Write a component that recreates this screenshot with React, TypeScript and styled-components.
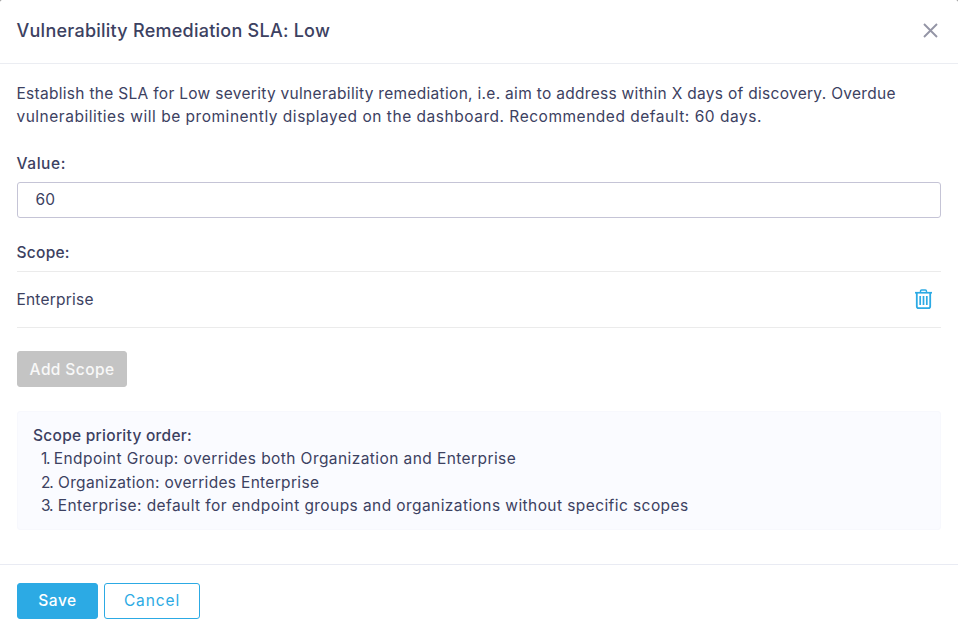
import React from 'react';
import styled, { createGlobalStyle } from 'styled-components';

const GlobalStyle = createGlobalStyle`
  * { box-sizing: border-box; }
  body {
    margin: 0;
    background: #808080;
    color: #3c4161;
    font: 400 15.5px/23.33px Inter, 'Liberation Sans', sans-serif;
  }
  button, input { font: inherit; color: inherit; }
`;

const Dialog = styled.section`
  display: flex;
  flex-direction: column;
  height: 635px;
  background: #fff;
  border-radius: 2px 2px 0 0;
`;

const Header = styled.header`
  display: flex;
  align-items: center;
  justify-content: space-between;
  height: 64px;
  padding: 0 20px 2px 16.5px;
  border-bottom: 1px solid #ebedf2;
`;

const Title = styled.h1`
  margin: 0;
  font-size: 18px;
  font-weight: 500;
  line-height: 24px;
  letter-spacing: 0.25px;
`;

const IconButton = styled.button`
  display: flex;
  padding: 0;
  border: 0;
  background: none;
  cursor: pointer;
`;

const Body = styled.main`
  flex: 1;
  padding: 18px 17px 0;
`;

const Text = styled.span<{ $tracking: number }>`
  letter-spacing: ${(p) => p.$tracking}px;
  white-space: nowrap;
`;

const Description = styled.p`
  display: flex;
  flex-direction: column;
  margin: 0 0 0 -0.6px;
`;

const Label = styled.label<{ $tracking: number }>`
  display: block;
  margin-left: -0.4px;
  font-weight: 500;
  letter-spacing: ${(p) => p.$tracking}px;
`;

const ValueField = styled.div`
  display: flex;
  flex-direction: column;
  gap: 7px;
  margin-top: 23px;
`;

const ValueInput = styled.input`
  width: 100%;
  height: 36px;
  padding: 0 17.4px;
  border: 1px solid #c5c4d6;
  border-radius: 3px;
  background: #fff;
  letter-spacing: 0.3px;
  outline: none;
`;

const ScopeSection = styled.section`
  margin-top: 23px;
`;

const ScopeRow = styled.div`
  display: flex;
  align-items: center;
  justify-content: space-between;
  height: 57px;
  margin-top: 7px;
  padding-right: 9px;
  border-top: 1px solid #ebebeb;
  border-bottom: 1px solid #ebebeb;
`;

const ScopeName = styled(Text)`
  margin-left: -0.6px;
`;

const DeleteButton = styled(IconButton)`
  margin-bottom: 1px;
`;

const Button = styled.button<{
  $kind: 'primary' | 'outline' | 'disabled';
  $width: number;
  $tracking: number;
}>`
  width: ${(p) => p.$width}px;
  height: 36px;
  padding: 0;
  border: 1px solid ${(p) => (p.$kind === 'disabled' ? '#c4c4c4' : '#2caae4')};
  border-radius: 3px;
  background: ${(p) => ({ primary: '#2caae4', outline: '#fff', disabled: '#c4c4c4' })[p.$kind]};
  color: ${(p) => ({ primary: '#fff', outline: '#2caae4', disabled: '#f8f8f8' })[p.$kind]};
  font-weight: ${(p) => (p.$kind === 'outline' ? 400 : 500)};
  letter-spacing: ${(p) => p.$tracking}px;
`;

const AddRow = styled.div`
  display: flex;
  margin: 23px 0 24px;
`;

const PriorityBox = styled.aside`
  height: 119px;
  padding: 12px 15px;
  border: 1px solid #f7f8fd;
  border-radius: 3px;
  background: #fafbff;
`;

const PriorityTitle = styled.div`
  height: 23px;
  font-weight: 500;
  letter-spacing: 0.27px;
`;

const PriorityList = styled.div`
  padding-left: 8px;
`;

const PriorityItem = styled.div`
  display: flex;
  height: 23.5px;
`;

const PriorityNumber = styled.span<{ $width: number }>`
  flex: none;
  width: ${(p) => p.$width}px;
  letter-spacing: -1.2px;
`;

const Footer = styled.footer`
  display: flex;
  gap: 6px;
  height: 71px;
  padding: 18px 17px 0;
  border-top: 1px solid #e9ebf3;
`;

const priorities = [
  { number: '1.', width: 12.8, text: 'Endpoint Group: overrides both Organization and Enterprise', tracking: 0.42 },
  { number: '2.', width: 17, text: 'Organization: overrides Enterprise', tracking: 0.32 },
  { number: '3.', width: 16.8, text: 'Enterprise: default for endpoint groups and organizations without specific scopes', tracking: 0.42 },
];

function CloseIcon() {
  return (
    <svg width="15" height="15" viewBox="0 0 15 15" fill="none" stroke="#9495a6" strokeWidth="1.9">
      <path d="M1 1L14 14M14 1L1 14" />
    </svg>
  );
}

function TrashIcon() {
  return (
    <svg width="17" height="20" viewBox="0 0 17 20" fill="none" stroke="#2caae4">
      <path d="M0 3.75H17" strokeWidth="1.7" />
      <path d="M5.5 3.5V2.2Q5.5 1 6.7 1H10.3Q11.5 1 11.5 2.2V3.5" strokeWidth="1.4" />
      <path d="M1.8 4V17.2Q1.8 19.1 3.6 19.1H13.4Q15.2 19.1 15.2 17.2V4" strokeWidth="1.8" />
      <path d="M5.2 7V16M8.5 7V16M11.8 7V16" strokeWidth="1.7" />
    </svg>
  );
}

export default function App() {
  return (
    <>
      <GlobalStyle />
      <Dialog role="dialog" aria-labelledby="dialog-title">
        <Header>
          <Title id="dialog-title">Vulnerability Remediation SLA: Low</Title>
          <IconButton aria-label="Close"><CloseIcon /></IconButton>
        </Header>
        <Body>
          <Description>
            <Text $tracking={0.3}>
              Establish the SLA for Low severity vulnerability remediation, i.e. aim to address within X days of discovery. Overdue
            </Text>
            <Text $tracking={0.52}>
              vulnerabilities will be prominently displayed on the dashboard. Recommended default: 60 days.
            </Text>
          </Description>
          <ValueField>
            <Label htmlFor="sla-value" $tracking={0.55}>Value:</Label>
            <ValueInput id="sla-value" defaultValue="60" />
          </ValueField>
          <ScopeSection>
            <Label as="div" $tracking={0.25}>Scope:</Label>
            <ScopeRow>
              <ScopeName $tracking={0.22}>Enterprise</ScopeName>
              <DeleteButton aria-label="Delete scope"><TrashIcon /></DeleteButton>
            </ScopeRow>
          </ScopeSection>
          <AddRow>
            <Button $kind="disabled" $width={110} $tracking={0.4} disabled>Add Scope</Button>
          </AddRow>
          <PriorityBox>
            <PriorityTitle>Scope priority order:</PriorityTitle>
            <PriorityList>
              {priorities.map((p) => (
                <PriorityItem key={p.number}>
                  <PriorityNumber $width={p.width}>{p.number}</PriorityNumber>
                  <Text $tracking={p.tracking}>{p.text}</Text>
                </PriorityItem>
              ))}
            </PriorityList>
          </PriorityBox>
        </Body>
        <Footer>
          <Button $kind="primary" $width={81} $tracking={0.5}>Save</Button>
          <Button $kind="outline" $width={96} $tracking={0.9}>Cancel</Button>
        </Footer>
      </Dialog>
    </>
  );
}
